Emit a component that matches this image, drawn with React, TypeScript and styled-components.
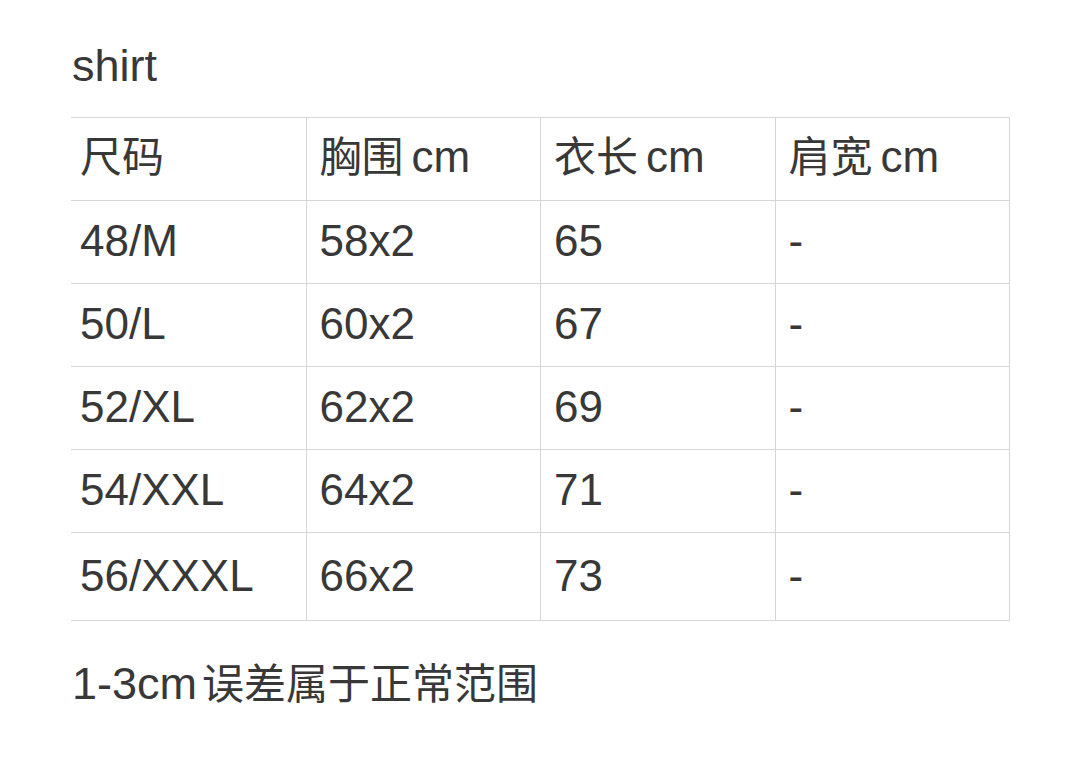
import React from "react";
import styled, { createGlobalStyle } from "styled-components";

const GlobalStyle = createGlobalStyle`
  html, body { margin: 0; padding: 0; background: #ffffff; }
  body {
    font-family: "Liberation Sans", "Noto Sans CJK SC", Arial, sans-serif;
    color: #383838;
  }
`;

const Page = styled.div`
  width: 1080px;
  height: 774px;
  box-sizing: border-box;
  padding: 34px 71px 0 71px;
  display: flex;
  flex-direction: column;
`;

const Title = styled.div`
  font-size: 45px;
  line-height: 64px;
  height: 64px;
  padding-left: 1px;
  margin-bottom: 19px;
`;

const Table = styled.div`
  width: 938px;
  display: grid;
  grid-template-columns: repeat(4, 1fr);
  border-top: 1px solid #d6d6d6;
  border-right: 1px solid #d6d6d6;
`;

const Cell = styled.div<{ $tall?: boolean; $first?: boolean }>`
  height: ${(p) => (p.$tall ? 87 : 82)}px;
  display: flex;
  align-items: center;
  line-height: 1;
  padding-left: ${(p) => (p.$first ? 9 : 13)}px;
  border-bottom: 1px solid #d6d6d6;
  border-left: ${(p) => (p.$first ? "none" : "1px solid #d6d6d6")};
  font-size: 44px;
  white-space: nowrap;
`;

const CellText = styled.span<{ $shift: number }>`
  display: inline-block;
  position: relative;
  top: ${(p) => p.$shift}px;
`;

const Cjk = styled.span`
  font-size: 42px;
  font-family: "Noto Sans CJK SC", sans-serif;
`;

const Gap = styled.span<{ $w: number }>`
  display: inline-block;
  width: ${(p) => p.$w}px;
`;

const Note = styled.div`
  font-size: 45px;
  line-height: 60px;
  margin-top: 30px;
  padding-left: 1px;
  display: flex;
  align-items: baseline;
  white-space: nowrap;
`;

const header = ["尺码", "胸围", "衣长", "肩宽"];
const rows = [
  ["48/M", "58x2", "65", "-"],
  ["50/L", "60x2", "67", "-"],
  ["52/XL", "62x2", "69", "-"],
  ["54/XXL", "64x2", "71", "-"],
  ["56/XXXL", "66x2", "73", "-"],
];

export default function App() {
  return (
    <>
      <GlobalStyle />
      <Page>
        <Title>shirt</Title>
        <Table>
          {header.map((h, i) => (
            <Cell key={"h" + i} $first={i === 0}>
              <CellText $shift={-3}>
                <Cjk>{h}</Cjk>
                {i > 0 && (
                  <>
                    <Gap $w={8} />
                    cm
                  </>
                )}
              </CellText>
            </Cell>
          ))}
          {rows.map((r, ri) =>
            r.map((c, ci) => (
              <Cell
                key={ri + "-" + ci}
                $first={ci === 0}
                $tall={ri === rows.length - 1}
              >
                <CellText $shift={-1}>{c}</CellText>
              </Cell>
            ))
          )}
        </Table>
        <Note>
          1-3cm
          <Gap $w={5} />
          <Cjk>误差属于正常范围</Cjk>
        </Note>
      </Page>
    </>
  );
}
